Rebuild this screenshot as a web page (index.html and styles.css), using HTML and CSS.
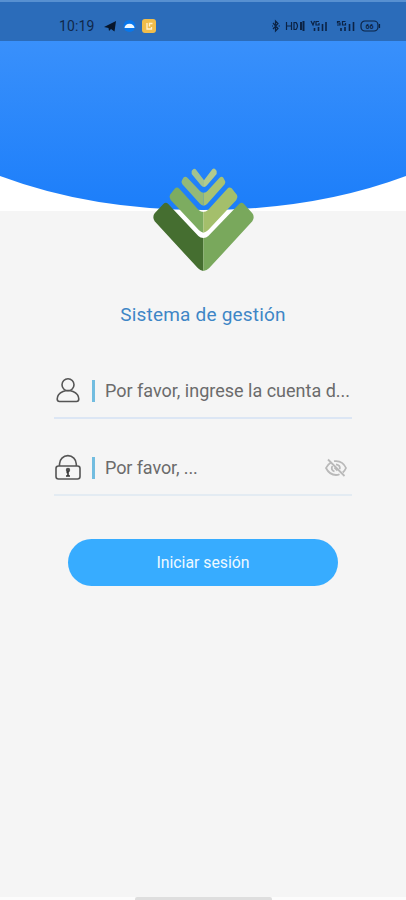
FILE: index.html
```
<!DOCTYPE html>
<html lang="es">
<head>
<meta charset="utf-8">
<meta name="viewport" content="width=device-width, initial-scale=1">
<title>Sistema de gestión</title>
<link rel="stylesheet" href="styles.css">
</head>
<body>
<div class="screen">
  <header class="hero">
    <div class="status">
      <span class="time">10:19</span>
      <svg class="apps" viewBox="0 0 56 16" width="56" height="16">
        <path d="M1 9 13 3 11.5 13.5 8 11 6 13 5.5 10Z" fill="#07162b"/>
        <circle cx="26.5" cy="8" r="6" fill="#0877ec"/>
        <path d="M21.5 10a5 4.3 0 0 1 10 0Z" fill="#eef8ff"/>
        <rect x="39" y="1" width="14" height="14" rx="3" fill="#f0bd4c"/>
        <path d="M44 5v6h4.500V9M46.500 8.500V5.500H49.500" fill="none" stroke="#fff2cf" stroke-width="1.3"/>
      </svg>
      <svg class="signals" viewBox="0 0 112 16" width="112" height="16">
        <g fill="none" stroke="#0b2345" stroke-width="1.2">
          <path d="m3 5 5 5.5L5.500 13V3L8 5.500 3 11M2 8h1M8.500 8h1.500"/>
          <path d="M16.500 4v8M21.500 4v8M16.500 8h5M24 4.500v7h2q3-3.500 0-7Z"/>
          <path d="M31 4v8M33.500 3v10" stroke-width="2"/>
          <path d="m41 3 2 4 1.500-4M49 3.500h-3V7h3V5M70 3.500h-2.500V5H70v2h-3M75.500 3.500h-3V7h3V5"/>
          <path d="M44.500 10v3M48.500 9v4M52.500 6v7M56 4v9M71 10v3M75 9v4M79.500 6v7M83.500 4v9" stroke-width="1.600"/>
          <rect x="91" y="3" width="17" height="10" rx="4"/>
          <path d="M109.500 6v4"/>
        </g>
        <text class="battery" x="99.500" y="10.500" text-anchor="middle">66</text>
      </svg>
    </div>
    <svg class="curve" viewBox="0 0 406 170" width="406" height="170">
      <defs><linearGradient id="sky" x1="0" y1="0" x2="0" y2="1"><stop offset="0" stop-color="#3990fb"/><stop offset="1" stop-color="#1c7efa"/></linearGradient></defs>
      <path d="M0 0H406V135Q315 169 203 169T0 135Z" fill="url(#sky)"/>
    </svg>
  </header>
  <main class="login">
    <svg class="logo" viewBox="0 0 390 375" width="130" height="125" stroke-linejoin="round">
      <path d="M104 168H126L180 224Q190 236 201 224L253 168H277L201 243Q190 254 179 243Z" fill="#fff" stroke="#fff" stroke-width="4"/>
      <path d="M84 146Q77 140 70 147L44 175Q36 186 44 199L174 340Q182 348 190 348V249Q181 249 175 243Z" fill="#456e30"/>
      <path d="M298 146Q305 140 312 147L337 175Q345 186 337 199L207 340Q199 348 190 348V249Q199 249 205 243Z" fill="#79a85c"/>
      <path d="M118 101Q111 94 104 101L90 119Q86 127 92 135L177 226Q183 232 190 233V171Q182 171 176 165Z" fill="#7dac60"/>
      <path d="M262 101Q268 94 275 100L291 120Q295 127 289 135L204 226Q198 232 190 233V171Q198 171 204 165Z" fill="#a4bf6b"/>
      <path d="M143 69Q136 62 130 68L126 76Q122 82 127 88L180 146Q184 151 191 152V113Q184 113 179 107Z" fill="#93b978"/>
      <path d="M238 69Q245 62 250 68L254 76Q259 82 254 88L202 146Q198 151 191 152V113Q198 113 203 107Z" fill="#a8c273"/>
      <path d="M167 43Q163 39 158 44L155 48V57L183 91Q187 96 192 96V76Z" fill="#a3c38e"/>
      <path d="M217 43Q222 38 226 43L230 48V57L201 91Q197 96 192 96V76Z" fill="#b1ca8d"/>
    </svg>
    <h1 class="title">Sistema de gestión</h1>
    <form class="form">
      <div class="field">
        <svg class="icon" viewBox="0 0 28 28" width="28" height="28" fill="none" stroke="#555" stroke-width="1.600">
          <circle cx="14" cy="7.700" r="6"/>
          <path d="M9 14.500Q3.200 17 3.200 22 3.300 24.500 5.500 24.500H22.500Q24.700 24.500 24.800 22 24.800 17 19 14.500Q14 12.500 9 14.500"/>
        </svg>
        <span class="caret"></span>
        <span class="hint">Por favor, ingrese la cuenta d...</span>
      </div>
      <div class="field second">
        <svg class="icon" viewBox="0 0 28 28" width="28" height="28" fill="none" stroke="#555" stroke-width="1.600">
          <rect x="2" y="12" width="24" height="13" rx="2.500"/>
          <path d="M5.500 12V10A8.300 8.300 0 0 1 22.300 10V12"/>
          <circle cx="14" cy="16" r="1.400" fill="#333"/>
          <path d="M14 17v5M12 22h4M12.500 18.500H14" stroke="#333"/>
        </svg>
        <span class="caret"></span>
        <span class="hint">Por favor, ...</span>
        <svg class="eye" viewBox="0 0 24 20" width="24" height="20" fill="none" stroke="#b9b9b9" stroke-width="1.800">
          <path d="M7 4.500Q3.500 6.500 2 10 5.500 17 12 17 14 17 15.500 16.200M10 3.200Q18.500 2 22 10 21 12.500 18.800 14.500"/>
          <path d="M8.300 8Q6.500 12 10.500 13.500M12 6.300Q16.500 7 15.800 11.200M10.500 9.500l3 3"/>
          <path d="M4 1.500 20.500 18"/>
        </svg>
      </div>
      <button class="submit" type="button">Iniciar sesión</button>
    </form>
  </main>
  <footer class="bottom"><span class="handle"></span></footer>
</div>
</body>
</html>
```
FILE: styles.css
```
* { box-sizing: border-box; }
body {
  margin: 0;
  font-family: Roboto, "Liberation Sans", sans-serif;
  background: #f5f5f5;
}
.screen {
  display: flex;
  flex-direction: column;
  width: 406px;
  height: 900px;
  overflow: hidden;
}
.hero { height: 211px; flex: none; background: #fff; }
.status {
  display: flex;
  align-items: center;
  height: 41px;
  padding: 9px 24px 0 59px;
  border-top: 2px solid #5790d1;
  background: #2b6cba;
}
.time {
  width: 44px;
  font-size: 14px;
  line-height: 16px;
  letter-spacing: 0.1px;
  color: #10284b;
}
.signals { margin-left: auto; }
.battery { font: 700 7px Roboto, sans-serif; fill: #0b2345; }
.curve { display: block; }
.login {
  display: flex;
  flex: 1;
  flex-direction: column;
  align-items: center;
}
.logo { flex: none; margin: -56px 0 0 4px; position: relative; }
.title {
  margin: 23px 0 0;
  font-size: 19px;
  font-weight: 400;
  line-height: 24px;
  letter-spacing: 0.2px;
  color: #3e86c6;
}
.form {
  display: flex;
  flex-direction: column;
  align-items: center;
  width: 298px;
  margin-top: 38px;
}
.field {
  display: flex;
  align-items: center;
  width: 100%;
  height: 54px;
  border-bottom: 2px solid #dce6f4;
}
.second { margin-top: 23px; border-color: #e3ebf2; }
.icon { flex: none; }
.caret {
  width: 3px;
  height: 22px;
  margin: 0 10px 0 10px;
  background: #72bde0;
}
.hint {
  font-size: 18px;
  line-height: 24px;
  color: #6b6b6b;
  white-space: nowrap;
}
.second .hint { letter-spacing: -0.1px; }
.eye { margin: 0 4px 0 auto; }
.submit {
  width: 270px;
  height: 47px;
  margin-top: 43px;
  padding: 0;
  border: 0;
  border-radius: 23.5px;
  background: #37acff;
  color: #eef9ff;
  font: 400 15.8px/47px Roboto, sans-serif;
}
.bottom {
  display: flex;
  justify-content: center;
  height: 3px;
  background: #fcfcfc;
}
.handle { width: 137px; height: 3px; border-radius: 2px 2px 0 0; background: #dedede; }
```
